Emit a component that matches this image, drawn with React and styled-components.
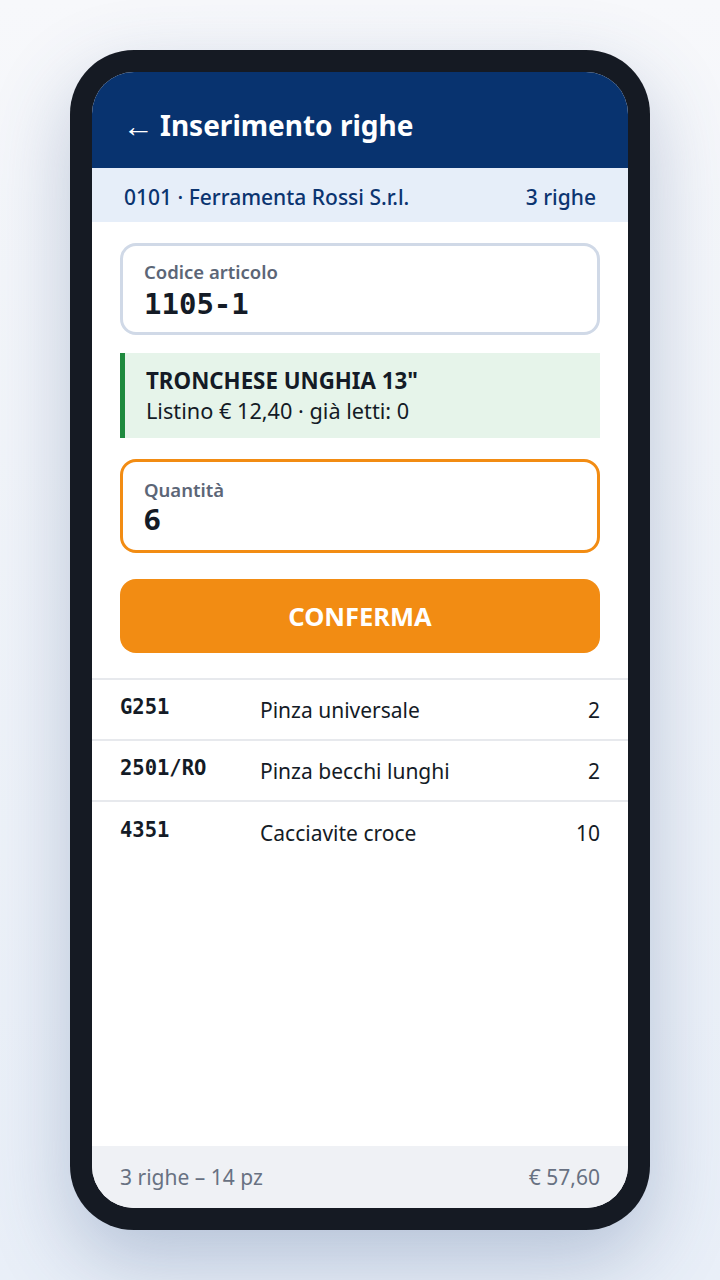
import React from 'react';
import styled, { createGlobalStyle } from 'styled-components';

const GlobalStyle = createGlobalStyle`
    * { box-sizing: border-box; }
    body {
        margin: 0;
        font-family: "Noto Sans", "Open Sans", sans-serif;
        background: linear-gradient(180deg, #f7f8fb 0%, #e9eff8 100%);
    }
`;

const Page = styled.div`
    width: 720px;
    height: 1280px;
    padding: 50px 70px;
`;

const Phone = styled.div`
    height: 1180px;
    background: #151a23;
    border-radius: 64px;
    padding: 22px;
    box-shadow: 0 30px 80px rgba(60, 90, 140, 0.3);
`;

const Screen = styled.div`
    height: 100%;
    background: #fff;
    border-radius: 42px;
    overflow: hidden;
    display: flex;
    flex-direction: column;
`;

const Header = styled.div`
    height: 96px;
    background: #08336f;
    color: #fff;
    display: flex;
    align-items: center;
    gap: 6px;
    padding: 10px 32px 0 31px;
    font-size: 28px;
    font-weight: 700;
`;

const Arrow = styled.span`
    font-weight: 400;
    font-size: 31px;
`;

const SubHeader = styled.div`
    height: 54px;
    background: #e6eef9;
    color: #0b3470;
    display: flex;
    align-items: center;
    justify-content: space-between;
    padding: 3px 32px 0;
    font-size: 21px;
    font-weight: 500;
`;

const Form = styled.div`
    padding: 21px 28px 25px;
    display: flex;
    flex-direction: column;
`;

const Field = styled.div`
    border: ${p => (p.active ? '3px solid #f28c13' : '3px solid #d0d9e7')};
    border-radius: 16px;
    padding: ${p => (p.active ? '17px 21px 13px' : '15px 21px 10px')};
    margin-bottom: ${p => p.gap}px;
`;

const Label = styled.div`
    font-size: 18.5px;
    font-weight: 600;
    color: #5c6677;
    line-height: 22px;
`;

const Value = styled.div`
    font-family: ${p => (p.mono ? '"DejaVu Sans Mono", monospace' : '"Noto Sans", sans-serif')};
    font-size: 29px;
    font-weight: 700;
    color: #141b26;
    line-height: 36px;
    margin-top: ${p => (p.mono ? 3 : 0)}px;
`;

const Product = styled.div`
    background: #e6f4ea;
    border-left: 5px solid #1e8a3e;
    padding: 13px 21px 12px;
    margin-bottom: 21px;
    color: #141b26;
`;

const ProductName = styled.div`
    font-size: 22.3px;
    font-weight: 700;
    line-height: 30px;
`;

const ProductInfo = styled.div`
    font-size: 21.7px;
    line-height: 30px;
`;

const Button = styled.button`
    height: 74px;
    border: none;
    border-radius: 16px;
    background: #f28c13;
    color: #fff;
    font-family: inherit;
    font-size: 25.5px;
    font-weight: 700;
`;

const List = styled.div`
    flex: 1;
    border-top: 2px solid #e7e9ed;
`;

const Row = styled.div`
    height: 61px;
    display: grid;
    grid-template-columns: 140px 1fr auto;
    align-items: center;
    padding: 0 28px;
    border-bottom: ${p => (p.last ? 'none' : '2px solid #e7e9ed')};
    color: #141b26;
`;

const Code = styled.div`
    font-family: "DejaVu Sans Mono", monospace;
    font-size: 20.5px;
    font-weight: 700;
    margin-top: -6px;
`;

const Desc = styled.div`
    font-size: 21px;
`;

const Qty = styled.div`
    font-size: 21px;
    text-align: right;
`;

const Footer = styled.div`
    height: 62px;
    background: #eff1f5;
    color: #687182;
    display: flex;
    align-items: center;
    justify-content: space-between;
    padding: 0 28px;
    font-size: 21px;
`;

const rows = [
    { code: 'G251', desc: 'Pinza universale', qty: 2 },
    { code: '2501/RO', desc: 'Pinza becchi lunghi', qty: 2 },
    { code: '4351', desc: 'Cacciavite croce', qty: 10 },
];

const App = () => (
    <Page>
        <GlobalStyle />
        <Phone>
            <Screen>
                <Header>
                    <Arrow>←</Arrow>
                    <span>Inserimento righe</span>
                </Header>
                <SubHeader>
                    <span>0101 · Ferramenta Rossi S.r.l.</span>
                    <span>3 righe</span>
                </SubHeader>
                <Form>
                    <Field gap={18}>
                        <Label>Codice articolo</Label>
                        <Value mono>1105-1</Value>
                    </Field>
                    <Product>
                        <ProductName>TRONCHESE UNGHIA 13"</ProductName>
                        <ProductInfo>Listino € 12,40 · già letti: 0</ProductInfo>
                    </Product>
                    <Field active gap={26}>
                        <Label>Quantità</Label>
                        <Value>6</Value>
                    </Field>
                    <Button>CONFERMA</Button>
                </Form>
                <List>
                    {rows.map((r, i) => (
                        <Row key={r.code} last={i === rows.length - 1}>
                            <Code>{r.code}</Code>
                            <Desc>{r.desc}</Desc>
                            <Qty>{r.qty}</Qty>
                        </Row>
                    ))}
                </List>
                <Footer>
                    <span>3 righe – 14 pz</span>
                    <span>€ 57,60</span>
                </Footer>
            </Screen>
        </Phone>
    </Page>
);

export default App;
